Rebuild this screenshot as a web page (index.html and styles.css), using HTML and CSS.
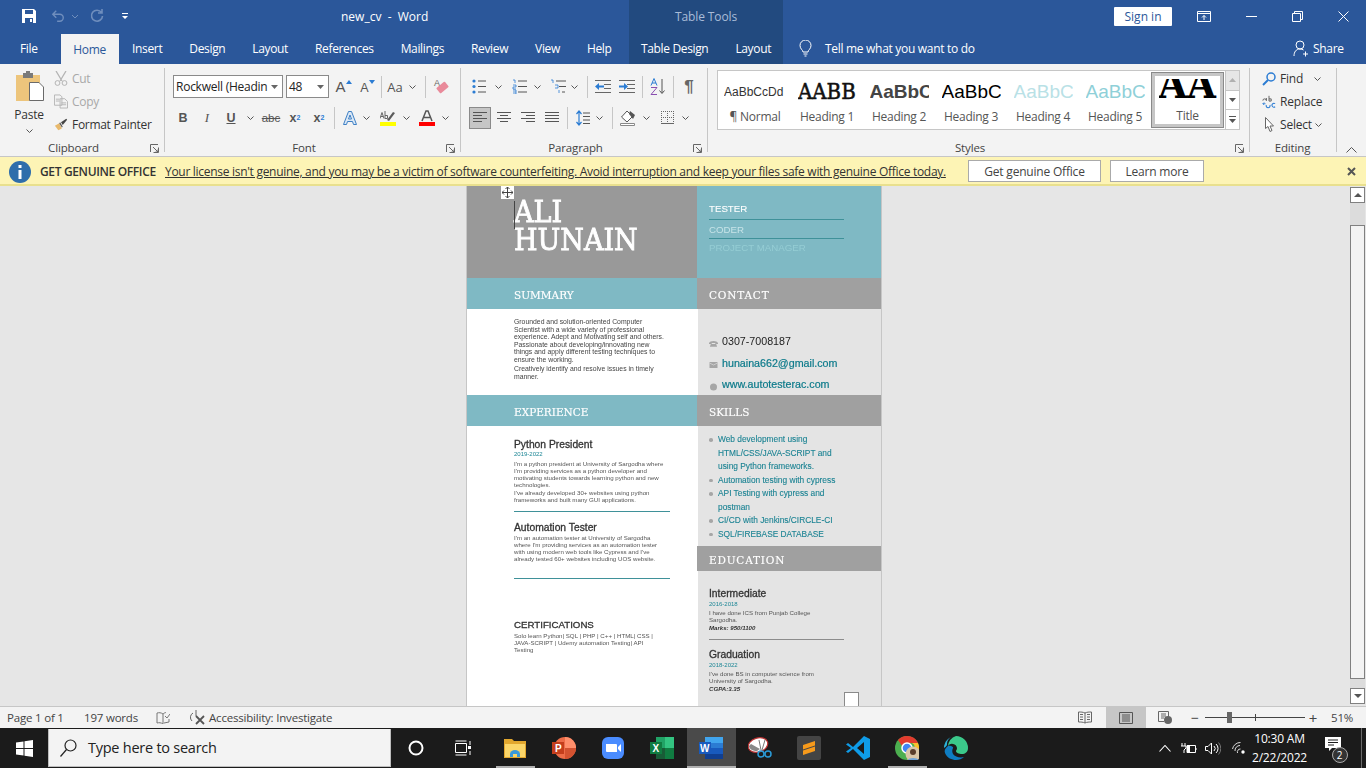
FILE: index.html
```html
<!DOCTYPE html>
<html lang="en">
<head>
<meta charset="utf-8">
<title>new_cv - Word</title>
<link rel="stylesheet" href="styles.css">
</head>
<body>
<div class="app">
  <header class="titlebar">
    <div class="qat">
      <svg class="q-save" width="16" height="16" viewBox="0 0 16 16"><path d="M1 1h12l2 2v12H1z" fill="#fff"/><path d="M4 2h8v4H4zM4 10h8v5H4z" fill="#2b579a"/><path d="M9 11h2v3H9z" fill="#fff"/></svg>
      <svg class="q-undo" width="14" height="14" viewBox="0 0 16 14"><path d="M6 1 2 5l4 4M2 5h8a4 4 0 0 1 0 8H7" fill="none" stroke="#6f8ebd" stroke-width="1.6"/></svg>
      <svg class="q-dn" width="8" height="5" viewBox="0 0 8 5"><path d="m1 1 3 3 3-3" fill="none" stroke="#6f8ebd"/></svg>
      <svg class="q-redo" width="14" height="14" viewBox="0 0 14 14"><path d="M11.500 3.500a5.500 5.500 0 1 0 1 3.500M12 0v4H8" fill="none" stroke="#6f8ebd" stroke-width="1.6"/></svg>
      <svg class="q-cust" width="8" height="8" viewBox="0 0 8 8"><path d="M1 1h6v1H1zM1 4h6L4 7z" fill="#fff"/></svg>
    </div>
    <div class="doc-title">new_cv&nbsp; -&nbsp; Word</div>
    <div class="tt-band">Table Tools</div>
    <div class="win">
      <button class="signin">Sign in</button>
      <svg class="w-disp" width="14" height="11" viewBox="0 0 14 11"><path d="M.5.500h13v10H.5zM.5 2.500h13M7 9V4.500M5 6.500l2-2 2 2" fill="none" stroke="#fff"/></svg>
      <svg class="w-min" width="11" height="1" viewBox="0 0 11 1"><path d="M0 .5h11" stroke="#fff"/></svg>
      <svg class="w-max" width="11" height="11" viewBox="0 0 11 11"><path d="M.5 2.500h8v8h-8zM2.500 2.500v-2h8v8h-2" fill="none" stroke="#fff"/></svg>
      <svg class="w-close" width="11" height="11" viewBox="0 0 11 11"><path d="m.5.500 10 10M10.500.500l-10 10" stroke="#fff" fill="none"/></svg>
    </div>
  </header>

  <nav class="tabs">
    <div class="tabs-l">
      <span class="tab t-file">File</span>
      <span class="tab active">Home</span>
      <span class="tab">Insert</span>
      <span class="tab">Design</span>
      <span class="tab">Layout</span>
      <span class="tab">References</span>
      <span class="tab">Mailings</span>
      <span class="tab">Review</span>
      <span class="tab">View</span>
      <span class="tab">Help</span>
    </div>
    <div class="ctx"><span class="tab t-c1">Table Design</span><span class="tab">Layout</span></div>
    <svg class="bulb" width="13" height="17" viewBox="0 0 13 17"><path d="M4 12c0-2-3-3-3-6.500a5.500 5.500 0 0 1 11 0C12 9 9 10 9 12zM4.500 14h4M5.500 16h2" fill="none" stroke="#fff"/></svg>
    <span class="tellme">Tell me what you want to do</span>
    <div class="share">
      <svg width="16" height="17" viewBox="0 0 16 17"><circle cx="7" cy="5" r="4" fill="none" stroke="#fff"/><path d="M1 16c0-4 2-7 6-7 1.500 0 2.500.4 3.500 1M10 14h5M12.500 11.500v5" fill="none" stroke="#fff"/></svg>
      <span>Share</span>
    </div>
  </nav>

  <section class="ribbon">
    <div class="grp g-clip">
      <div class="clip">
        <div class="paste">
          <svg width="29" height="30" viewBox="0 0 29 30"><path d="M1 4h24v26H1z" fill="#edc57c"/><path d="M8 2h10v5H8z" fill="#7a7a7a"/><path d="M11 0h4v3h-4z" fill="#7a7a7a"/><path d="M14.500 11.500h9.500l4.500 4.500v13.500h-14z" fill="#fff" stroke="#6a6a6a"/></svg>
          <span class="paste-l">Paste</span>
          <svg class="chev" width="7" height="4" viewBox="0 0 7 4"><path d="m.5.500 3 3 3-3" fill="none" stroke="#555"/></svg>
        </div>
        <div class="clip-list">
          <div class="cl dim"><svg width="14" height="15" viewBox="0 0 14 15"><path d="m2 0 6 10M12 0 6 10" stroke="#b4b4b4" fill="none" stroke-width="1.300"/><circle cx="3.500" cy="12" r="2.400" fill="none" stroke="#b4b4b4"/><circle cx="10.500" cy="12" r="2.400" fill="none" stroke="#b4b4b4"/></svg><span>Cut</span></div>
          <div class="cl dim"><svg width="15" height="15" viewBox="0 0 15 15"><path d="M.5.500h6l2 2v9h-8zM6.500 4.500h5l3 3v7h-8z" fill="#f3f3f3" stroke="#b4b4b4"/><path d="M2 5h4M2 7h4M8 9h5M8 11h5" stroke="#b4b4b4"/></svg><span>Copy</span></div>
          <div class="cl"><svg width="16" height="15" viewBox="0 0 16 15"><path d="M6 6 1 9l4 5 4-2z" fill="#e8b96c"/><path d="m6 6 3 5 1-1-3-5z" fill="#555"/><path d="m8 5 6-4 1 1-5 6z" fill="#444"/></svg><span>Format Painter</span></div>
        </div>
      </div>
      <div class="g-label">Clipboard</div>
      <svg class="launch" width="9" height="9" viewBox="0 0 9 9"><path d="M.5 8V.5H8M8.500 3.500v5h-5M3 3l5 5M5.500 8H8V5.500" fill="none" stroke="#666"/></svg>
    </div>

    <div class="grp g-font">
      <div class="row r-f1">
        <div class="combo c-name"><span>Rockwell (Headin</span><svg width="7" height="4" viewBox="0 0 7 4"><path d="M0 0h7L3.500 4z" fill="#666"/></svg></div>
        <i class="s3"></i>
        <div class="combo c-size"><span>48</span><svg width="7" height="4" viewBox="0 0 7 4"><path d="M0 0h7L3.500 4z" fill="#666"/></svg></div>
        <i class="s1"></i>
        <div class="b w24"><span class="ga ga-up">A</span></div>
        <div class="b w24"><span class="ga ga-dn">A</span></div>
        <i class="s2"></i>
        <div class="sep"></div>
        <div class="b w26 aa">Aa</div>
        <div class="b w8"><svg class="chev" width="7" height="4" viewBox="0 0 7 4"><path d="m.5.500 3 3 3-3" fill="none" stroke="#555"/></svg></div>
        <div class="sep s-wide"></div>
        <div class="b w14"><span class="erase">A</span></div>
      </div>
      <div class="row r-f2">
        <div class="b w24 fb">B</div>
        <div class="b w24 fi">I</div>
        <div class="b w24 fu">U</div>
        <div class="b w14"><svg class="chev" width="7" height="4" viewBox="0 0 7 4"><path d="m.5.500 3 3 3-3" fill="none" stroke="#555"/></svg></div>
        <div class="b w28 fs">abc</div>
        <div class="b w20 fx">x<sub>2</sub></div>
        <div class="b w28 fx">x<sup>2</sup></div>
        <div class="sep"></div>
        <i class="s4"></i>
        <div class="b w22"><svg width="14" height="16" viewBox="0 0 14 16"><path d="M5.500 1.500h3l5 13h-3l-1-3h-5l-1 3H.500zM7 5 5.500 9h3z" fill="#dbe8f6" stroke="#3d7fc4"/></svg></div>
        <div class="b w10"><svg class="chev" width="7" height="4" viewBox="0 0 7 4"><path d="m.5.500 3 3 3-3" fill="none" stroke="#555"/></svg></div>
        <i class="s6"></i>
        <div class="b w22"><svg width="16" height="16" viewBox="0 0 16 16"><path d="M0 8.500 2 2.500l2 6M1 6.500h2M5 1v7.500M5 5.500h2.500v3H5" fill="none" stroke="#666"/><path d="m7 10 6-8 2 1-6 8z" fill="#5b5b5b"/><path d="M0 12h16v4H0z" fill="#ffff00"/></svg></div>
        <i class="s2"></i>
        <div class="b w10"><svg class="chev" width="7" height="4" viewBox="0 0 7 4"><path d="m.5.500 3 3 3-3" fill="none" stroke="#555"/></svg></div>
        <i class="s5"></i>
        <div class="b w22"><svg width="16" height="16" viewBox="0 0 16 16"><path d="M3 11 7 1h2l4 10M5 7.500h6" fill="none" stroke="#555" stroke-width="1.500"/><path d="M0 12h16v4H0z" fill="#f00"/></svg></div>
        <i class="s2"></i>
        <div class="b w10"><svg class="chev" width="7" height="4" viewBox="0 0 7 4"><path d="m.5.500 3 3 3-3" fill="none" stroke="#555"/></svg></div>
      </div>
      <div class="g-label">Font</div>
      <svg class="launch" width="9" height="9" viewBox="0 0 9 9"><path d="M.5 8V.5H8M8.500 3.500v5h-5M3 3l5 5M5.500 8H8V5.500" fill="none" stroke="#666"/></svg>
    </div>

    <div class="grp g-para">
      <div class="row r-p1">
        <div class="b w24"><svg width="14" height="15" viewBox="0 0 14 15"><circle cx="2" cy="2" r="1.600" fill="#2b7cd3"/><circle cx="2" cy="7.500" r="1.600" fill="#2b7cd3"/><circle cx="2" cy="13" r="1.600" fill="#2b7cd3"/><path d="M6 2h8M6 7.500h8M6 13h8" stroke="#555"/></svg></div>
        <div class="b w14"><svg class="chev" width="7" height="4" viewBox="0 0 7 4"><path d="m.5.500 3 3 3-3" fill="none" stroke="#555"/></svg></div>
        <i class="s2"></i>
        <div class="b w24"><svg width="15" height="15" viewBox="0 0 15 15"><path d="M6 2h9M6 7.500h9M6 13h9" stroke="#555"/><path d="M1 1h2v3M1 6h3v2H1v2h3M1 11h3v4H1M1 13h3" fill="none" stroke="#2b7cd3" stroke-width=".8"/></svg></div>
        <div class="b w12"><svg class="chev" width="7" height="4" viewBox="0 0 7 4"><path d="m.5.500 3 3 3-3" fill="none" stroke="#555"/></svg></div>
        <i class="s3"></i>
        <div class="b w24"><svg width="16" height="15" viewBox="0 0 16 15"><path d="M6 2h10M9 7.500h7M12 13h3" stroke="#555"/><path d="M1 1h2v3M5 6h3v3H5M9 11v3" fill="none" stroke="#2b7cd3" stroke-width=".8"/></svg></div>
        <div class="b w8"><svg class="chev" width="7" height="4" viewBox="0 0 7 4"><path d="m.5.500 3 3 3-3" fill="none" stroke="#555"/></svg></div>
        <i class="s8"></i>
        <div class="sep"></div>
        <i class="s3"></i>
        <div class="b w24"><svg width="16" height="13" viewBox="0 0 16 13"><path d="M0 .5h16M9 4.500h7M9 8.500h7M0 12.500h16" stroke="#666"/><path d="M0 6.500 4 3v2.500h5v2H4V10z" fill="#2b7cd3"/></svg></div>
        <div class="b w24"><svg width="16" height="13" viewBox="0 0 16 13"><path d="M0 .5h16M8 4.500h8M8 8.500h8M0 12.500h16" stroke="#666"/><path d="M9 6.500 5 3v2.500H0v2h5V10z" fill="#2b7cd3"/></svg></div>
        <i class="s2"></i>
        <div class="sep"></div>
        <i class="s3"></i>
        <div class="b w24"><svg width="16" height="17" viewBox="0 0 16 17"><path d="M4 .5 1 7.500M4 .5l3 7M2 5h4" fill="none" stroke="#2b7cd3"/><path d="M1 9.500h6L1 16.500h6" fill="none" stroke="#8a4fb0"/><path d="M12 1v14M9.500 12.500 12 15.500l2.500-3" fill="none" stroke="#555"/></svg></div>
        <i class="s2"></i>
        <div class="sep"></div>
        <i class="s3"></i>
        <div class="b w24 pil">¶</div>
      </div>
      <div class="row r-p2">
        <i class="s2"></i>
        <div class="b w22 sel"><svg width="14" height="11" viewBox="0 0 14 11"><path d="M0 .5h14M0 3.500h9M0 6.500h14M0 9.500h9" stroke="#555"/></svg></div>
        <i class="s1"></i>
        <div class="b w24"><svg width="14" height="11" viewBox="0 0 14 11"><path d="M0 .5h14M3 3.500h8M0 6.500h14M3 9.500h8" stroke="#555"/></svg></div>
        <div class="b w24"><svg width="14" height="11" viewBox="0 0 14 11"><path d="M0 .5h14M5 3.500h9M0 6.500h14M5 9.500h9" stroke="#555"/></svg></div>
        <div class="b w24"><svg width="14" height="11" viewBox="0 0 14 11"><path d="M0 .5h14M0 3.500h14M0 6.500h14M0 9.500h14" stroke="#555"/></svg></div>
        <i class="s2"></i>
        <div class="sep"></div>
        <i class="s3"></i>
        <div class="b w24"><svg width="14" height="16" viewBox="0 0 14 16"><path d="M3 1v14M.5 4 3 1l2.500 3M.5 12 3 15l2.500-3" fill="none" stroke="#2b7cd3" stroke-width="1.200"/><path d="M7 3h7M7 6.500h7M7 10h7M7 13.500h7" stroke="#555"/></svg></div>
        <div class="b w8"><svg class="chev" width="7" height="4" viewBox="0 0 7 4"><path d="m.5.500 3 3 3-3" fill="none" stroke="#555"/></svg></div>
        <i class="s8"></i>
        <div class="sep"></div>
        <i class="s3"></i>
        <div class="b w24"><svg width="16" height="16" viewBox="0 0 16 16"><path d="M7 1 1.500 7 7 12l5.500-5.500z" fill="#fff" stroke="#555"/><path d="m10 1 5 4-2 4-4-5z" fill="#555"/><path d="M.5 13.500h14v2H.5z" fill="#fff" stroke="#888"/></svg></div>
        <div class="b w12"><svg class="chev" width="7" height="4" viewBox="0 0 7 4"><path d="m.5.500 3 3 3-3" fill="none" stroke="#555"/></svg></div>
        <i class="s3"></i>
        <div class="b w24"><svg width="13" height="13" viewBox="0 0 13 13" shape-rendering="crispEdges"><path d="M.5 0v13M6.500 0v13M12.500 0v13M0 .5h13M0 6.500h13" fill="none" stroke="#666" stroke-dasharray="1 1"/><path d="M0 12.500h13" stroke="#666"/></svg></div>
        <div class="b w12"><svg class="chev" width="7" height="4" viewBox="0 0 7 4"><path d="m.5.500 3 3 3-3" fill="none" stroke="#555"/></svg></div>
      </div>
      <div class="g-label">Paragraph</div>
      <svg class="launch" width="9" height="9" viewBox="0 0 9 9"><path d="M.5 8V.5H8M8.500 3.500v5h-5M3 3l5 5M5.500 8H8V5.500" fill="none" stroke="#666"/></svg>
    </div>

    <div class="grp g-styles">
      <div class="gallery">
        <div class="st"><div class="pv pv-n">AaBbCcDd</div><div class="st-l">¶ Normal</div></div>
        <div class="st"><div class="pv pv-1">AABB</div><div class="st-l">Heading 1</div></div>
        <div class="st"><div class="pv pv-2">AaBbC</div><div class="st-l">Heading 2</div></div>
        <div class="st"><div class="pv pv-3">AaBbC</div><div class="st-l">Heading 3</div></div>
        <div class="st"><div class="pv pv-4">AaBbC</div><div class="st-l">Heading 4</div></div>
        <div class="st"><div class="pv pv-5">AaBbC</div><div class="st-l">Heading 5</div></div>
        <div class="st st-sel"><div class="pv pv-t"><span>AA</span></div><div class="st-l st-lt">Title</div></div>
        <div class="g-scroll">
          <div class="gs gs-up"><svg width="7" height="4" viewBox="0 0 7 4"><path d="M0 4h7L3.500 0z" fill="#b0b0b0"/></svg></div>
          <div class="gs"><svg width="7" height="4" viewBox="0 0 7 4"><path d="M0 0h7L3.500 4z" fill="#555"/></svg></div>
          <div class="gs"><svg width="7" height="7" viewBox="0 0 7 7"><path d="M0 .5h7" stroke="#555"/><path d="M0 3h7L3.500 7z" fill="#555"/></svg></div>
        </div>
      </div>
      <div class="g-label">Styles</div>
      <svg class="launch" width="9" height="9" viewBox="0 0 9 9"><path d="M.5 8V.5H8M8.500 3.500v5h-5M3 3l5 5M5.500 8H8V5.500" fill="none" stroke="#666"/></svg>
    </div>

    <div class="grp g-edit">
      <div class="ed-list">
        <div class="ed"><svg width="14" height="14" viewBox="0 0 14 14"><circle cx="9" cy="5" r="4" fill="none" stroke="#2b7cd3" stroke-width="1.500"/><path d="m6 8-5 5" stroke="#2b7cd3" stroke-width="2"/></svg><span>Find</span><svg class="ed-c1" width="7" height="4" viewBox="0 0 7 4"><path d="m.5.500 3 3 3-3" fill="none" stroke="#555"/></svg></div>
        <div class="ed"><svg width="16" height="15" viewBox="0 0 16 15"><path d="M1 6.500a2 2 0 1 1 4 0v-3M8 1v6M8 4.500h2.500v2.500H8" fill="none" stroke="#555"/><path d="M9 11.500a2.200 2.200 0 1 1-4 0M15 10a2.200 2.200 0 1 0 0 3.500" fill="none" stroke="#2b7cd3" stroke-width="1.200"/><path d="M4 10H1M2.500 8.500 1 10l1.500 1.500" fill="none" stroke="#2b7cd3"/></svg><span>Replace</span></div>
        <div class="ed"><svg width="14" height="15" viewBox="0 0 14 15"><path d="M3.500.5v11l2.500-2 2 5 2-1-2-4.500h3.500z" fill="#fff" stroke="#666"/></svg><span>Select</span><svg class="ed-c2" width="7" height="4" viewBox="0 0 7 4"><path d="m.5.500 3 3 3-3" fill="none" stroke="#555"/></svg></div>
      </div>
      <div class="g-label g-label-e">Editing</div>
    </div>
    <div class="collapse"><svg width="11" height="6" viewBox="0 0 11 6"><path d="m.5 5.500 5-5 5 5" fill="none" stroke="#555"/></svg></div>
  </section>

  <section class="msgbar">
    <svg class="m-ic" width="22" height="22" viewBox="0 0 22 22"><circle cx="11" cy="11" r="11" fill="#2f6eab"/><path d="M9.500 4h3v3h-3zM9.500 9h3v9h-3z" fill="#fff"/></svg>
    <strong class="m-h">GET GENUINE OFFICE</strong>
    <span class="m-link">Your license isn't genuine, and you may be a victim of software counterfeiting. Avoid interruption and keep your files safe with genuine Office today.</span>
    <button class="m-btn m-b1">Get genuine Office</button>
    <button class="m-btn m-b2">Learn more</button>
    <svg class="m-x" width="9" height="9" viewBox="0 0 9 9"><path d="m1 1 7 7M8 1 1 8" stroke="#555" stroke-width="2"/></svg>
  </section>

  <main class="docarea">
    <div class="pagewrap">
      <div class="page">
        <div class="hero-l"><h1 class="name">ALI<br>HUNAIN</h1></div>
        <div class="hero-r">
          <div class="role r1">TESTER</div>
          <div class="role r2">CODER</div>
          <div class="role r3">PROJECT MANAGER</div>
        </div>
        <h2 class="sh sh-l">SUMMARY</h2>
        <h2 class="sh sh-r sh-w">CONTACT</h2>
        <div class="c-l summary">Grounded and solution-oriented Computer<br>Scientist with a wide variety of professional<br>experience. Adept and Motivating self and others.<br>Passionate about developing/innovating new<br>things and apply different testing techniques to<br>ensure the working.<p>Creatively identify and resolve issues in timely<br>manner.</p></div>
        <div class="c-r contact">
          <div class="ct"><svg width="10" height="7" viewBox="0 0 10 7"><path d="M0 3c1-3 9-3 10 0v1H7V3H3v1H0zM2 4h6l1 3H1z" fill="#a6a6a6"/></svg><span class="ct-ph">0307-7008187</span></div>
          <div class="ct"><svg width="8" height="6" viewBox="0 0 8 6"><path d="M0 0h8v6H0z" fill="#a6a6a6"/><path d="m0 1 4 2 4-2" stroke="#e4e4e4" fill="none" stroke-width=".6"/></svg><span class="ct-a">hunaina662@gmail.com</span></div>
          <div class="ct"><svg width="8" height="8" viewBox="0 0 8 8"><circle cx="4" cy="4" r="3.500" fill="#a6a6a6"/></svg><span class="ct-a">www.autotesterac.com</span></div>
        </div>
        <h2 class="sh sh-l">EXPERIENCE</h2>
        <h2 class="sh sh-r">SKILLS</h2>
        <div class="c-l exp">
          <h3 class="job">Python President</h3>
          <div class="yr">2019-2022</div>
          <div class="tx tx1">I'm a python president at University of Sargodha where<br>I'm providing services as a python developer and<br>motivating students towards learning python and new<br>technologies.<p>I've already developed 30+ websites using python<br>frameworks and built many GUI applications.</p></div>
          <hr class="rule r-a">
          <h3 class="job j2">Automation Tester</h3>
          <div class="tx tx2">I'm an automation tester at University of Sargodha<br>where I'm providing services as an automation tester<br>with using modern web tools like Cypress and I've<br>already tested 60+ websites including UOS website.</div>
          <hr class="rule r-b">
          <h3 class="job cert">CERTIFICATIONS</h3>
          <div class="tx tx3">Solo learn Python| SQL | PHP | C++ | HTML| CSS |<br>JAVA-SCRIPT | Udemy automation Testing| API<br>Testing</div>
        </div>
        <div class="c-r col-r">
          <ul class="skills">
            <li>Web development using<br>HTML/CSS/JAVA-SCRIPT and<br>using Python frameworks.</li>
            <li>Automation testing with cypress</li>
            <li>API Testing with cypress and<br>postman</li>
            <li>CI/CD with Jenkins/CIRCLE-CI</li>
            <li>SQL/FIREBASE DATABASE</li>
          </ul>
          <h2 class="sh sh-e sh-w">EDUCATION</h2>
          <div class="edu">
            <h3 class="job">Intermediate</h3>
            <div class="yr">2016-2018</div>
            <div class="tx">I have done ICS from Punjab College<br>Sargodha.</div>
            <div class="mk">Marks: 950/1100</div>
            <hr class="rule r-c">
            <h3 class="job">Graduation</h3>
            <div class="yr">2018-2022</div>
            <div class="tx">I've done BS in computer science from<br>University of Sargodha.</div>
            <div class="mk">CGPA:3.35</div>
          </div>
        </div>
        <div class="handle"><svg width="11" height="11" viewBox="0 0 11 11"><path d="M5.500 0v11M0 5.500h11M3.500 2l2-2 2 2M3.500 9l2 2 2-2M2 3.500l-2 2 2 2M9 3.500l2 2-2 2" fill="none" stroke="#444"/></svg></div>
        <div class="caret"></div>
        <div class="resize"></div>
      </div>
    </div>
    <div class="vscroll">
      <div class="sb-btn"><svg width="8" height="4" viewBox="0 0 8 4"><path d="M0 4h8L4 0z" fill="#555"/></svg></div>
      <div class="sb-track"><div class="sb-thumb"></div></div>
      <div class="sb-btn"><svg width="8" height="4" viewBox="0 0 8 4"><path d="M0 0h8L4 4z" fill="#555"/></svg></div>
    </div>
  </main>

  <footer class="status">
    <span class="s-page">Page 1 of 1</span>
    <span class="s-words">197 words</span>
    <svg class="s-proof" width="14" height="12" viewBox="0 0 14 12"><path d="M7 2C5 .5 3 .5 1 1v10c2-.5 4-.5 6 1V2zM7 2c1-1 2-1.300 3-1.500" fill="none" stroke="#777"/><path d="m9 4 2 2 3-4M8 11l5-1V7" fill="none" stroke="#777"/></svg>
    <svg class="s-acc" width="17" height="15" viewBox="0 0 17 15"><path d="M7 0v6M4 3a5 5 0 0 0-1 8" fill="none" stroke="#666"/><path d="m7 6 8 8M15 6l-8 8" stroke="#555" stroke-width="1.800"/></svg>
    <span class="s-acct">Accessibility: Investigate</span>
    <div class="s-right">
      <svg class="v1" width="14" height="13" viewBox="0 0 14 13"><path d="M7 2C5 1 3 1 .5 1v10C3 11 5 11 7 12c2-1 4-1 6.500-1V1C11 1 9 1 7 2zM7 2v10M2 3.500h3M2 6h3M2 8.500h3M9 3.500h3M9 6h3M9 8.500h3" fill="none" stroke="#666"/></svg>
      <div class="v2"><svg width="14" height="12" viewBox="0 0 14 12"><path d="M.5.500h13v11H.500zM3 3h8M3 5h8M3 7h8M3 9h8" fill="none" stroke="#555"/></svg></div>
      <svg class="v3" width="14" height="13" viewBox="0 0 14 13"><path d="M.5.500h10v8M.5.500v10H6M3 3h5M3 5h5M3 7h3" fill="none" stroke="#666"/><circle cx="10" cy="9" r="4" fill="#666"/></svg>
      <div class="zoom">
        <span class="z-m">−</span>
        <div class="z-track"><div class="z-thumb"></div><div class="z-tick"></div></div>
        <span class="z-p">+</span>
        <span class="z-v">51%</span>
      </div>
    </div>
  </footer>

  <div class="taskbar">
    <div class="start"><svg width="17" height="17" viewBox="0 0 17 17"><path d="m0 2.500 7.500-1v6.500H0zM8.500 1.300 17 0v8H8.500zM0 9h7.500v6.500l-7.500-1zM8.500 9H17v8l-8.500-1.300z" fill="#fff"/></svg></div>
    <div class="search">
      <svg width="17" height="18" viewBox="0 0 17 18"><circle cx="10.500" cy="6.500" r="5.500" fill="none" stroke="#222" stroke-width="1.200"/><path d="m6.500 10.500-6 7" stroke="#222" stroke-width="1.200"/></svg>
      <span>Type here to search</span>
    </div>
    <div class="tk t-cort"><svg width="16" height="16" viewBox="0 0 16 16"><circle cx="8" cy="8" r="6.500" fill="none" stroke="#fff" stroke-width="2"/></svg></div>
    <div class="tk t-view"><svg width="18" height="16" viewBox="0 0 18 16"><path d="M.5 3.500h11v9H.5zM.5 1h11M.5 15h11M15 1v4M15 11v4" fill="none" stroke="#fff"/><path d="M13 6h3v3h-3z" fill="#fff"/></svg></div>
    <div class="tk on-run"><svg width="22" height="20" viewBox="0 0 22 20"><path d="M0 1h8l2 2h12v17H0z" fill="#e2a72e"/><path d="M1 6h20v13H1z" fill="#fbd669"/><path d="M6 16a5 4 0 0 1 10 0v3H6z" fill="#3a9ad9"/><path d="M9 16h4v3H9z" fill="#fbd669"/></svg></div>
    <div class="tk"><svg width="24" height="22" viewBox="0 0 24 22"><circle cx="13" cy="11" r="11" fill="#ed6c47"/><path d="M13 0a11 11 0 0 1 11 11H13z" fill="#ff8f6b"/><path d="M13 11h11a11 11 0 0 1-11 11z" fill="#d35230"/><path d="M0 5h12v12H0z" fill="#c43e1c"/><text x="3" y="15" class="app-l" font-size="10">P</text></svg></div>
    <div class="tk"><svg width="22" height="22" viewBox="0 0 22 22"><rect width="22" height="22" rx="6" fill="#4a8cff"/><path d="M4 7h10a1 1 0 0 1 1 1v7H5a1 1 0 0 1-1-1zM16 10l3-3v8l-3-3z" fill="#fff"/></svg></div>
    <div class="tk"><svg width="24" height="22" viewBox="0 0 24 22"><path d="M6 0h18v22H6z" fill="#21a366"/><path d="M15 0h9v11h-9z" fill="#33c481"/><path d="M6 11h9v11H6z" fill="#185c37"/><path d="M15 11h9v11h-9z" fill="#107c41"/><path d="M0 5h12v12H0z" fill="#107c41"/><text x="2.500" y="15" class="app-l" font-size="10">X</text></svg></div>
    <div class="tk active-app"><svg width="24" height="22" viewBox="0 0 24 22"><path d="M6 0h18v6H6z" fill="#41a5ee"/><path d="M6 6h18v5H6z" fill="#2b7cd3"/><path d="M6 11h18v6H6z" fill="#185abd"/><path d="M6 17h18v5H6z" fill="#103f91"/><path d="M0 5h12v12H0z" fill="#185abd"/><text x="1" y="15" class="app-l" font-size="10">W</text></svg></div>
    <div class="tk"><svg width="24" height="22" viewBox="0 0 24 22"><ellipse cx="10" cy="8" rx="10" ry="7" fill="#fff" stroke="#b33" stroke-width="1.200" transform="rotate(-18 10 8)"/><path d="M1 9c0 3 4 5 8 5l3-2-9-5z" fill="#888"/><path d="m11 3 2 10M17 3l-3 10" stroke="#777"/><circle cx="13" cy="17" r="3" fill="none" stroke="#2b9bd8" stroke-width="1.500"/><circle cx="20" cy="17" r="3" fill="none" stroke="#2b9bd8" stroke-width="1.500"/></svg></div>
    <div class="tk"><svg width="24" height="24" viewBox="0 0 24 24"><rect width="24" height="24" rx="2" fill="#444"/><path d="M18 5 6 9v4.500L18 9.500zM6 14.500 18 10.500V15L6 19z" fill="#f79a1b"/></svg></div>
    <div class="tk"><svg width="24" height="24" viewBox="0 0 24 24"><path d="M18 0 7 11 2 7 0 8.500 5 12l-5 3.500L2 17l5-4 11 11 6-3V3zm0 6v12l-7-6z" fill="#0f9ce8"/></svg></div>
    <div class="tk on-run chrome"><svg width="24" height="24" viewBox="0 0 24 24"><circle cx="12" cy="12" r="12" fill="#4caf50"/><path d="M12 0a12 12 0 0 1 11 7H12a5 5 0 0 0-5 3L3 4a12 12 0 0 1 9-4z" fill="#e33b2e"/><path d="M23 7a12 12 0 0 1-11 17l5-8a5 5 0 0 0 0-9z" fill="#fbc02d"/><circle cx="12" cy="12" r="5" fill="#4285f4" stroke="#fff" stroke-width="1.500"/><circle cx="18" cy="18" r="7.500" fill="#d9c6a8"/><circle cx="18" cy="16" r="3" fill="#5a3d2b"/><path d="M12 24a7 4 0 0 1 12 0z" fill="#6fa3d8"/></svg></div>
    <div class="tk"><svg width="24" height="24" viewBox="0 0 24 24"><path d="M12 0a12 12 0 0 1 12 12c0 4-3 6-6 6-3 0-6-1-6-3 0-1 1-1 1-3a5 5 0 0 0-9-2 12 12 0 0 1 8-10z" fill="#3bc98a"/><path d="M4 10C1 12 0 15 1 17c2 5 7 7 11 7 3 0 6-1 8-3-4 1-9 0-11-3-1-2-1-4 0-6 1-1-3-3-5-2z" fill="#0f7dc2"/><path d="M0 12A12 12 0 0 1 12 0c-6 0-9 4-9 8 0 1 0 2-3 4z" fill="#2ab1d8"/></svg></div>
    <div class="tray">
      <svg class="tr1" width="12" height="7" viewBox="0 0 12 7"><path d="m.5 6.500 5.500-6 5.500 6" fill="none" stroke="#fff" stroke-width="1.100"/></svg>
      <svg class="tr2" width="16" height="11" viewBox="0 0 16 11"><path d="M6 2.500h8.500v7H6zM15 5v2" fill="none" stroke="#fff"/><path d="M6 3h3v6H6z" fill="#fff"/><path d="M1 0v3M4 0v3M0 3h5v2L3 7v3" fill="none" stroke="#fff"/></svg>
      <svg class="tr3" width="16" height="13" viewBox="0 0 16 13"><path d="M.5 4.500h2.500L6.500 1v11L3 8.500H.5z" fill="none" stroke="#fff"/><path d="M9 4a3.500 3.500 0 0 1 0 5M11 2a6 6 0 0 1 0 9" fill="none" stroke="#fff"/><path d="M13.500.5a9 9 0 0 1 0 12" fill="none" stroke="#777"/></svg>
      <svg class="tr4" width="13" height="12" viewBox="0 0 13 12"><path d="M.5 7a8 8 0 0 1 8-6.500M3 9a5 5 0 0 1 5-5.500M5.500 11a3 3 0 0 1 3-4" fill="none" stroke="#ddd"/><circle cx="11" cy="10" r="1.700" fill="#fff"/></svg>
      <div class="clock"><div>10:30 AM</div><div>2/22/2022</div></div>
      <div class="notif">
        <svg width="16" height="15" viewBox="0 0 16 15"><path d="M0 0h16v11H7l-3 3v-3H0z" fill="#fff"/><path d="M3 3h10M3 5.500h10M3 8h6" stroke="#1b1b1b"/></svg>
        <span class="n-badge">2</span>
      </div>
      <div class="showdesk"></div>
    </div>
  </div>
</div>
</body>
</html>
```

FILE: styles.css
```css
* { box-sizing: border-box; }
html, body { margin: 0; padding: 0; }
body { width: 1366px; height: 768px; overflow: hidden; font-family: "Open Sans", "Noto Sans", sans-serif; color: #444; }
svg { display: block; flex: none; }
h1, h2, h3, p, ul { margin: 0; padding: 0; font-weight: normal; }
button { font-family: inherit; margin: 0; cursor: default; }

.app { width: 1366px; height: 768px; display: flex; flex-direction: column; background: #e6e6e6; }

/* title bar */
.titlebar { height: 32px; background: #2b579a; color: #fff; display: flex; align-items: center; position: relative; flex: none; }
.qat { width: 341px; display: flex; align-items: center; padding-left: 21px; }
.q-undo { margin-left: 14px; }
.q-dn { margin-left: 6px; }
.q-redo { margin-left: 11px; }
.q-cust { margin-left: 17px; }
.doc-title { width: 288px; font-size: 12px; }
.tt-band { width: 154px; align-self: stretch; background: #224a7f; color: #a9bcd8; font-size: 12px; display: flex; align-items: center; justify-content: center; letter-spacing: -.1px; }
.win { flex: 1; display: flex; align-items: center; padding-left: 331px; }
.signin { width: 58px; height: 19px; background: #fff; color: #2b579a; border: 0; border-radius: 1px; font-size: 12px; padding: 0; }
.w-disp { margin-left: 25px; }
.w-min { margin-left: 35px; }
.w-max { margin-left: 35px; }
.w-close { margin-left: 35px; }

/* tabs */
.tabs { height: 32px; background: #2b579a; color: #fff; display: flex; align-items: stretch; flex: none; font-size: 12px; }
.tabs-l { width: 629px; display: flex; align-items: stretch; padding-left: 7px; flex: none; }
.tab { padding: 0 13.5px; display: flex; align-items: center; letter-spacing: -.35px; white-space: nowrap; }
.t-file { padding: 0 23px 0 13px; }
.tab.active { background: #f3f3f3; color: #2b579a; margin-top: 2px; padding: 0; width: 58px; justify-content: center; height: 30px; }
.ctx { background: #224a7f; display: flex; width: 154px; flex: none; }
.t-c1 { padding: 0 13.5px 0 12px; }
.bulb { align-self: center; margin-left: 16px; }
.tellme { align-self: center; margin-left: 13px; letter-spacing: -.3px; width: 468px; white-space: nowrap; }
.share { display: flex; align-items: center; gap: 4px; letter-spacing: -.3px; }

/* ribbon */
.ribbon { height: 93px; background: #f3f3f3; border-bottom: 1px solid #c6c6c6; display: flex; flex: none; position: relative; color: #444; font-size: 12px; }
.grp { position: relative; display: flex; flex-direction: column; height: 92px; padding-top: 11px; }
.grp::after { content: ""; position: absolute; right: 0; top: 4px; bottom: 4px; width: 1px; background: #c6c6c6; }
.g-label { position: absolute; left: 0; right: 0; bottom: 0; height: 16px; line-height: 16px; padding-right: 18px; text-align: center; font-size: 11.500px; letter-spacing: -.15px; color: #444; }
.g-label-e { padding-right: 2px; }
.launch { position: absolute; right: 6px; bottom: 3px; }
.g-clip { width: 165px; }
.g-font { width: 296px; padding-left: 6px; }
.g-para { width: 247px; }
.g-styles { width: 542px; }
.g-edit { width: 87px; }
.row { display: flex; align-items: center; height: 23px; }
.r-f2, .r-p2 { margin-top: 8px; }
.b { display: flex; align-items: center; justify-content: center; height: 22px; flex: none; }
.w8 { width: 8px; } .w10 { width: 10px; } .w12 { width: 12px; } .w14 { width: 14px; } .w20 { width: 20px; } .w22 { width: 22px; } .w24 { width: 24px; } .w26 { width: 26px; } .w28 { width: 28px; }
i { display: block; flex: none; }
.s1 { width: 1px; } .s2 { width: 2px; } .s3 { width: 3px; } .s4 { width: 4px; } .s5 { width: 5px; } .s6 { width: 6px; } .s8 { width: 8px; }
.sep { width: 2px; height: 22px; flex: none; display: flex; justify-content: center; }
.sep::before { content: ""; width: 1px; background: #c6c6c6; }

.clip { display: flex; padding-left: 9px; margin-top: -4px; }
.paste { width: 40px; display: flex; flex-direction: column; align-items: center; padding-top: 0; }
.paste-l { font-size: 12px; margin-top: 5px; height: 17px; line-height: 17px; letter-spacing: -.2px; color: #333; }
.paste .chev { margin-top: 6px; }
.clip-list { display: flex; flex-direction: column; margin: -4px 0 0 5px; }
.cl { height: 23px; display: flex; align-items: center; gap: 4px; font-size: 12px; letter-spacing: -.3px; color: #333; white-space: nowrap; }
.cl.dim { color: #a8a8a8; }
.cl svg { width: 14px; }

.combo { height: 23px; border: 1px solid #8a8a8a; background: #fff; display: flex; align-items: center; justify-content: space-between; padding: 0 4px 0 2px; font-size: 12px; letter-spacing: -.25px; color: #222; overflow: hidden; white-space: nowrap; flex: none; }
.c-name { width: 110px; margin-left: 2px; }
.c-size { width: 43px; }
.ga { position: relative; font-family: "Liberation Sans", sans-serif; color: #555; line-height: 16px; padding-right: 3px; }
.ga-up { font-size: 15px; }
.ga-dn { font-size: 12.500px; padding-top: 2px; }
.ga::after { content: ""; position: absolute; right: -3px; top: 1px; border-left: 3.500px solid transparent; border-right: 3.500px solid transparent; }
.ga-up::after { border-bottom: 4px solid #2b7cd3; }
.ga-dn::after { border-top: 4px solid #2b7cd3; top: 2px; }
.aa { font-size: 13px; color: #555; }
.s-wide { width: 18px; }
.erase { position: relative; width: 15px; height: 15px; font-family: "Liberation Sans", sans-serif; font-size: 9px; line-height: 9px; color: #666; }
.erase::after { content: ""; position: absolute; left: 3px; top: 5px; width: 11px; height: 7px; background: #e98a9a; transform: rotate(-40deg); border-radius: 1px; }
.fb { font-weight: 700; font-size: 12.500px; font-family: "Liberation Sans", sans-serif; color: #555; }
.fi { font-style: italic; font-size: 13px; font-family: "Liberation Serif", serif; color: #555; }
.fu { text-decoration: underline; font-weight: 700; font-size: 12.500px; font-family: "Liberation Sans", sans-serif; color: #555; }
.fs { text-decoration: line-through; font-size: 11.500px; font-family: "Liberation Sans", sans-serif; color: #555; }
.fx { font-weight: 700; font-size: 12.500px; font-family: "Liberation Sans", sans-serif; color: #555; }
.fx sub, .fx sup { font-size: 7px; color: #2b7cd3; line-height: 0; }
.r-p1, .r-p2 { padding-left: 6px; }
.pil { font-size: 17px; color: #666; font-family: "Liberation Sans", sans-serif; font-weight: 700; }
.sel { background: #c6c6c6; border: 1px solid #8a8a8a; }

.gallery { width: 523px; height: 60px; margin: -5px 0 0 9px; display: flex; background: #fff; border: 1px solid #c6c6c6; padding-left: 1px; }
.st { width: 72px; height: 58px; display: flex; flex-direction: column; align-items: center; overflow: hidden; flex: none; }
.pv { width: 60px; height: 36px; padding-top: 5px; display: flex; align-items: center; justify-content: flex-start; overflow: hidden; white-space: nowrap; font-family: "Liberation Sans", sans-serif; }
.st-l { font-size: 12px; letter-spacing: -.25px; color: #555; line-height: 16px; margin-top: 2px; }
.pv-n { font-size: 12px; color: #333; width: 62px; }
.pv-1 { font-family: "DejaVu Serif Condensed", "DejaVu Serif", serif; font-size: 22px; color: #111; width: 58px; -webkit-text-stroke: .5px #111; }
.pv-2 { font-size: 19px; font-weight: 700; color: #444; width: 59px; }
.pv-3 { font-size: 19px; color: #000; width: 59px; }
.pv-4 { font-size: 19px; color: #b9e1e6; width: 59px; }
.pv-5 { font-size: 19px; color: #8fd0d8; width: 59px; }
.st-sel { width: 73px; height: 56px; border: 1px solid #8a8a8a; box-shadow: inset 0 0 0 3px #c6c6c6; margin-top: 1px; }
.pv-t { width: 58px; height: 20px; padding: 0; margin-top: 6px; align-items: flex-start; font-family: "DejaVu Serif Condensed", "DejaVu Serif", serif; font-weight: 700; color: #000; }
.pv-t span { font-size: 41px; line-height: 11.600px; display: block; }
.st-lt { margin-top: 9px; }
.g-scroll { width: 14px; margin-left: 1px; display: flex; flex-direction: column; flex: none; }
.gs { flex: 1; border-left: 1px solid #c6c6c6; border-bottom: 1px solid #c6c6c6; display: flex; align-items: center; justify-content: center; background: #fff; }
.gs:last-child { border-bottom: 0; }
.gs-up { background: #e6e6e6; }

.ed-list { padding-left: 12px; margin-top: -8px; }
.ed { height: 23px; display: flex; align-items: center; gap: 4px; font-size: 12px; letter-spacing: -.2px; color: #333; }
.ed svg:first-child { width: 14px; }
.ed-c1 { margin-left: 7px; }
.ed-c2 { margin-left: -1px; }
.collapse { padding: 83px 0 0 9px; }

/* message bar */
.msgbar { height: 29px; background: #fdf4b5; border-bottom: 2px solid #e9e08e; display: flex; align-items: center; flex: none; padding: 2px 0 0 9px; font-size: 12px; color: #333; }
.m-ic { margin-right: 9px; }
.m-h { font-weight: 600; width: 125px; font-size: 12px; letter-spacing: -.35px; white-space: nowrap; }
.m-link { width: 803px; text-decoration: underline; letter-spacing: -.29px; white-space: nowrap; }
.m-btn { height: 22px; margin-top: -1px; background: #fff; border: 1px solid #aaa; color: #444; font-size: 12px; letter-spacing: -.2px; padding: 0; }
.m-b1 { width: 133px; }
.m-b2 { width: 94px; margin-left: 9px; }
.m-x { margin-left: 143px; }

/* document */
.docarea { height: 520px; display: flex; background: #e6e6e6; flex: none; overflow: hidden; }
.pagewrap { flex: 1; padding-left: 466px; }
.page { position: relative; width: 416px; height: 521px; border-left: 1px solid #c6c6c6; border-right: 1px solid #c6c6c6; display: grid; grid-template-columns: 230px 184px; grid-template-rows: 92px 31px 86px 31px 281px; background: #fff; font-family: "Liberation Sans", sans-serif; }
.hero-l, .hero-r, .sh-l, .sh-r, .c-l, .c-r { filter: blur(.3px); }
.hero-l { background: #999; padding: 12px 0 0 47px; }
.name { font-family: "DejaVu Serif Condensed", "DejaVu Serif", serif; font-stretch: condensed; color: #fff; font-size: 30px; line-height: 28px; -webkit-text-stroke: .8px #fff; }
.hero-r { background: #7fb9c4; padding-left: 12px; font-size: 9.700px; }
.role { width: 135px; }
.r1 { color: #fff; height: 34px; padding-top: 17px; line-height: 11px; border-bottom: 1px solid #3f9199; -webkit-text-stroke: .1px #fff; }
.r2 { color: #c7e4e8; height: 19px; padding-top: 4px; line-height: 11px; border-bottom: 1px solid #3f9199; }
.r3 { color: #95cdd4; width: auto; padding-top: 3px; line-height: 11px; white-space: nowrap; }
.sh { font-family: "DejaVu Serif", serif; color: #fff; font-size: 10.500px; padding-top: 2px; display: flex; align-items: center; -webkit-text-stroke: .15px #fff; }
.sh-l { background: #7fb9c4; padding-left: 47px; }
.sh-r { background: #a0a0a0; padding-left: 12px; }
.sh-e { background: #a0a0a0; padding-left: 12px; height: 25px; flex: none; }
.sh-w { letter-spacing: .8px; }
.c-l { background: #fff; padding-left: 47px; }
.c-r { background: #e4e4e4; }
.contact, .skills, .edu { box-shadow: inset 1px 0 #fff; }
.summary { font-size: 6.850px; line-height: 7.600px; padding-top: 9px; color: #444; white-space: nowrap; }
.summary p { margin-top: 1.500px; }
.contact { padding: 21.500px 0 0 12px; }
.ct { height: 21.500px; display: flex; align-items: center; white-space: nowrap; }
.ct svg { width: 9px; margin-top: 5px; }
.ct span { margin-left: 4px; font-size: 10.700px; }
.ct-ph { color: #222; }
.ct-a { color: #0b7a8a; -webkit-text-stroke: .2px #0b7a8a; }
.exp { padding-top: 12px; }
.job { font-size: 10.300px; line-height: 11px; padding-top: 1px; color: #333; -webkit-text-stroke: .3px #333; white-space: nowrap; }
.yr { font-size: 6px; line-height: 9px; color: #1e8796; }
.tx { font-size: 6.150px; line-height: 7px; color: #555; white-space: nowrap; }
.tx p { margin-top: 1px; }
.tx1 { margin-top: 1px; }
.rule { border: 0; margin: 0; height: 1px; background: #3f9199; width: 156px; }
.r-a { margin-top: 8px; }
.j2 { margin-top: 8.500px; }
.tx2 { margin-top: 1.500px; }
.r-b { margin-top: 16px; }
.cert { margin-top: 39px; font-size: 9.700px; }
.tx3 { margin-top: 2px; }
.col-r { display: flex; flex-direction: column; }
.skills { height: 120px; padding: 7px 0 0 21px; font-size: 8.350px; line-height: 13.500px; color: #1b8393; list-style: none; white-space: nowrap; -webkit-text-stroke: .1px #1b8393; }
.skills li { position: relative; }
.skills li::before { content: ""; position: absolute; left: -9px; top: 5px; width: 3.500px; height: 3.500px; border-radius: 50%; background: #a6a6a6; }
.edu { padding: 16px 0 0 12px; flex: 1; }
.edu .yr { margin-top: 1px; }
.mk { font-size: 6.100px; line-height: 9px; font-weight: 700; font-style: italic; color: #333; }
.r-c { margin-top: 7px; width: 135px; background: #8c8c8c; margin-bottom: 8px; }
.handle { position: absolute; left: 34px; top: 0; width: 13px; height: 13px; background: #fff; display: flex; align-items: center; justify-content: center; }
.caret { position: absolute; left: 47px; top: 15px; width: 1px; height: 28px; background: #444; }
.resize { position: absolute; left: 377px; top: 506px; width: 15px; height: 15px; background: #fff; border: 1px solid #8a8a8a; }

.vscroll { width: 16px; padding: 1px 0 2px; display: flex; flex-direction: column; background: #e6e6e6; }
.sb-btn { height: 16px; width: 15px; background: #fff; border: 1px solid #808080; display: flex; align-items: center; justify-content: center; flex: none; }
.sb-track { flex: 1; min-height: 0; padding: 22px 0 9px; width: 15px; background: #dcdcdc; }
.sb-thumb { height: 100%; background: #f3f3f3; border: 1px solid #808080; }

/* status bar */
.status { height: 22px; background: #f3f3f3; border-top: 1px solid #c6c6c6; display: flex; align-items: center; flex: none; font-size: 11.500px; color: #444; padding-left: 7px; white-space: nowrap; letter-spacing: -.2px; }
.s-page { width: 77px; }
.s-words { width: 72px; }
.s-proof { margin-right: 19px; }
.s-acc { margin-right: 3px; }
.s-right { margin-left: auto; display: flex; align-items: center; height: 100%; padding-right: 14px; }
.v1 { margin-right: 14px; }
.v2 { width: 40px; align-self: stretch; background: #c6c6c6; display: flex; align-items: center; justify-content: center; }
.v3 { margin: 0 18px 0 12px; }
.zoom { display: flex; align-items: center; }
.z-m { width: 10px; font-size: 14px; line-height: 14px; color: #444; text-align: center; }
.z-track { position: relative; width: 100px; height: 1px; background: #444; margin-left: 5px; }
.z-thumb { position: absolute; left: 22px; top: -5px; width: 5px; height: 11px; background: #666; }
.z-tick { position: absolute; left: 50px; top: -3px; width: 1px; height: 7px; background: #444; }
.z-p { width: 12px; margin-left: 2px; font-size: 15px; line-height: 14px; color: #444; text-align: center; }
.z-v { margin-left: 12px; width: 21px; }

/* taskbar */
.taskbar { height: 40px; background: #1b1b1b; display: flex; align-items: stretch; flex: none; }
.start { width: 48px; display: flex; align-items: center; justify-content: center; }
.search { width: 343px; margin: 1px 0; background: #f3f3f3; border: 1px solid #bdbdbd; border-width: 0 1px 1px; display: flex; align-items: center; padding-left: 11px; gap: 11px; font-size: 14.500px; color: #222; letter-spacing: -.25px; white-space: nowrap; }
.tk { width: 49px; display: flex; align-items: center; justify-content: center; position: relative; flex: none; }
.t-cort { width: 50px; }
.t-view { width: 49.500px; padding-right: 4px; }
.on-run::after { content: ""; position: absolute; left: 5px; right: 5px; bottom: 0; height: 2px; background: #b0b0b0; }
.active-app { background: #4a4a4a; }
.active-app::after { content: ""; position: absolute; left: 0; right: 0; bottom: 0; height: 2px; background: #b0b0b0; }
.app-l { fill: #fff; font-family: "Liberation Sans", sans-serif; font-weight: 700; }
.tray { flex: 1; display: flex; align-items: center; padding-left: 178px; color: #fff; }
.tr2 { margin-left: 10px; }
.tr3 { margin-left: 8px; }
.tr4 { margin-left: 11px; }
.clock { width: 60px; margin-left: 5px; text-align: center; font-size: 12px; line-height: 19px; letter-spacing: -.2px; white-space: nowrap; flex: none; }
.notif { position: relative; width: 26px; margin-left: 10px; height: 100%; display: flex; align-items: center; padding-left: 5px; flex: none; }
.notif svg { margin-top: -7px; }
.n-badge { position: absolute; left: 12px; top: 19px; width: 16px; height: 16px; border-radius: 50%; background: #333; border: 1px solid #aaa; font-size: 10px; line-height: 14px; text-align: center; color: #fff; }
.showdesk { width: 1px; height: 100%; background: #6a6a6a; margin-left: 15px; }
```
